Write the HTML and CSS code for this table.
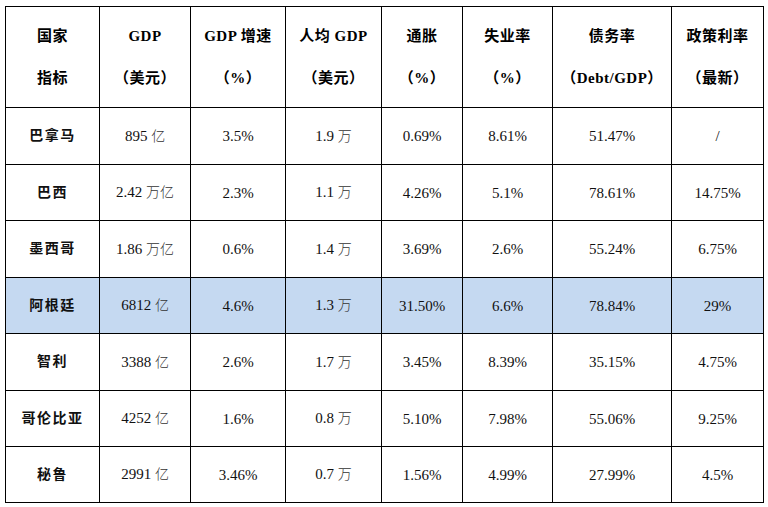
FILE: index.html
```html
<!DOCTYPE html>
<html lang="zh">
<head>
<meta charset="utf-8">
<link rel="stylesheet" href="styles.css">
</head>
<body>
<table class="data">
  <colgroup>
    <col class="c1"><col class="c2"><col class="c3"><col class="c4">
    <col class="c5"><col class="c6"><col class="c7"><col class="c8">
  </colgroup>
  <thead>
    <tr>
      <th>国家<br>指标</th>
      <th>GDP<br>（美元）</th>
      <th>GDP 增速<br>（%）</th>
      <th>人均 GDP<br>（美元）</th>
      <th>通胀<br>（%）</th>
      <th>失业率<br>（%）</th>
      <th>债务率<br>（Debt/GDP）</th>
      <th>政策利率<br>（最新）</th>
    </tr>
  </thead>
  <tbody>
    <tr class="r57">
      <td class="name">巴拿马</td><td>895 <span class="u">亿</span></td><td>3.5%</td><td>1.9 <span class="u">万</span></td><td>0.69%</td><td>8.61%</td><td>51.47%</td><td>/</td>
    </tr>
    <tr class="r56">
      <td class="name">巴西</td><td>2.42 <span class="u">万亿</span></td><td>2.3%</td><td>1.1 <span class="u">万</span></td><td>4.26%</td><td>5.1%</td><td>78.61%</td><td>14.75%</td>
    </tr>
    <tr class="r57">
      <td class="name">墨西哥</td><td>1.86 <span class="u">万亿</span></td><td>0.6%</td><td>1.4 <span class="u">万</span></td><td>3.69%</td><td>2.6%</td><td>55.24%</td><td>6.75%</td>
    </tr>
    <tr class="r56 hl">
      <td class="name">阿根廷</td><td>6812 <span class="u">亿</span></td><td>4.6%</td><td>1.3 <span class="u">万</span></td><td>31.50%</td><td>6.6%</td><td>78.84%</td><td>29%</td>
    </tr>
    <tr class="r57">
      <td class="name">智利</td><td>3388 <span class="u">亿</span></td><td>2.6%</td><td>1.7 <span class="u">万</span></td><td>3.45%</td><td>8.39%</td><td>35.15%</td><td>4.75%</td>
    </tr>
    <tr class="r56">
      <td class="name">哥伦比亚</td><td>4252 <span class="u">亿</span></td><td>1.6%</td><td>0.8 <span class="u">万</span></td><td>5.10%</td><td>7.98%</td><td>55.06%</td><td>9.25%</td>
    </tr>
    <tr class="r56">
      <td class="name">秘鲁</td><td>2991 <span class="u">亿</span></td><td>3.46%</td><td>0.7 <span class="u">万</span></td><td>1.56%</td><td>4.99%</td><td>27.99%</td><td>4.5%</td>
    </tr>
  </tbody>
</table>
</body>
</html>
```
FILE: styles.css
```css
html, body {
  margin: 0;
  padding: 0;
  background: #ffffff;
}

body {
  padding: 6px 0 0 5px;
  font-family: "Liberation Serif", "Noto Sans CJK SC", serif;
  color: #000000;
}

.data {
  border-collapse: collapse;
  table-layout: fixed;
  width: 758px;
}

.c1 { width: 94px; }
.c2 { width: 91px; }
.c3 { width: 95px; }
.c4 { width: 96px; }
.c5 { width: 81px; }
.c6 { width: 90px; }
.c7 { width: 119px; }
.c8 { width: 92px; }

.data th,
.data td {
  border: 1px solid #000000;
  text-align: center;
  vertical-align: middle;
  padding: 0;
}

.data th {
  height: 100px;
  font-size: 15px;
  font-weight: 700;
  line-height: 42px;
  letter-spacing: 0.5px;
}

.data td {
  font-size: 15px;
  line-height: 20px;
  color: #111111;
}

.r57 td { height: 56px; }
.r56 td { height: 55px; }

.data td.name {
  font-size: 14px;
  font-weight: 600;
  letter-spacing: 1.5px;
}

.u {
  font-size: 14px;
  color: #333333;
  font-weight: 300;
}

.hl td {
  background: #c5d9f1;
}
```
